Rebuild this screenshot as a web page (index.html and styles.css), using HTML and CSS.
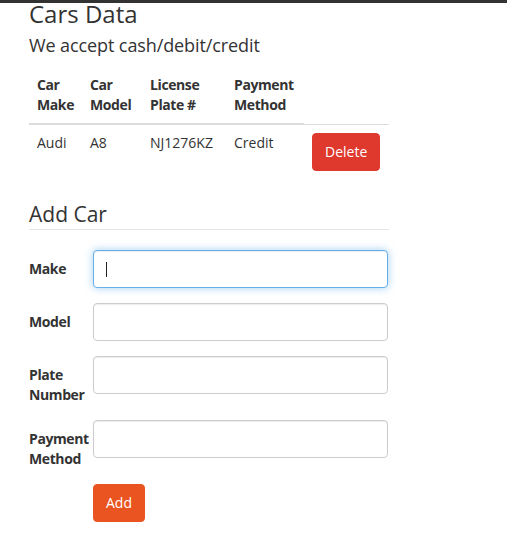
FILE: index.html
```html
<!DOCTYPE html>
<html>
<head>
<meta charset="utf-8">
<title>Cars Data</title>
<link rel="stylesheet" href="styles.css">
</head>
<body>
<div class="topbar"></div>
<div class="container">
  <h3 class="title">Cars Data</h3>
  <p class="lead">We accept cash/debit/credit</p>
  <table class="cars">
    <colgroup>
      <col class="c1"><col class="c2"><col class="c3"><col class="c4"><col class="c5">
    </colgroup>
    <thead>
      <tr>
        <th>Car Make</th>
        <th>Car Model</th>
        <th>License Plate #</th>
        <th>Payment Method</th>
      </tr>
    </thead>
    <tbody>
      <tr>
        <td>Audi</td>
        <td>A8</td>
        <td>NJ1276KZ</td>
        <td>Credit</td>
        <td><button class="btn btn-danger">Delete</button></td>
      </tr>
    </tbody>
  </table>
  <form class="addform">
    <legend>Add Car</legend>
    <div class="row">
      <label>Make</label>
      <div class="field">
        <input class="input focused" type="text">
        <span class="caret"></span>
      </div>
    </div>
    <div class="row">
      <label>Model</label>
      <div class="field"><input class="input" type="text"></div>
    </div>
    <div class="row">
      <label>Plate Number</label>
      <div class="field"><input class="input" type="text"></div>
    </div>
    <div class="row">
      <label>Payment Method</label>
      <div class="field"><input class="input" type="text"></div>
    </div>
    <div class="row">
      <span></span>
      <div class="field"><button type="button" class="btn btn-primary">Add</button></div>
    </div>
  </form>
</div>
</body>
</html>
```
FILE: styles.css
```css
html, body {
  margin: 0;
  padding: 0;
  background: #fff;
}
body {
  font-family: "Open Sans", "Liberation Sans", sans-serif;
  font-size: 14px;
  line-height: 20px;
  color: #333;
}
.topbar {
  height: 3px;
  background: #333;
}
.container {
  padding-left: 29px;
  width: 360px;
}
.title {
  margin: 0;
  font-size: 24px;
  font-weight: 400;
  line-height: 21px;
}
.lead {
  margin: 9px 0 9px;
  font-size: 18px;
  line-height: 25px;
  font-weight: 400;
  letter-spacing: -0.1px;
}
.cars {
  width: 360px;
  table-layout: fixed;
  border-collapse: collapse;
  border-spacing: 0;
  margin-bottom: 20px;
}
.c1 { width: 53px; }
.c2 { width: 60px; }
.c3 { width: 84px; }
.c4 { width: 78px; }
.c5 { width: 85px; }
.cars th {
  text-align: left;
  font-weight: 700;
  letter-spacing: -0.4px;
  vertical-align: bottom;
  padding: 8px;
  border-bottom: 2px solid #ddd;
}
.cars td {
  padding: 8px;
  vertical-align: top;
  border-top: 1px solid #ddd;
}
.btn {
  font-family: inherit;
  font-size: 14px;
  line-height: 20px;
  border: 1px solid transparent;
  border-radius: 4px;
  color: #fff;
  padding: 8px 12px;
  cursor: pointer;
}
.btn-danger {
  background: #df382c;
  border-color: #df382c;
}
.btn-primary {
  background: #e95420;
  border-color: #e95420;
  padding: 8px 12px;
}
.addform {
  margin: 0;
}
legend {
  display: block;
  width: 100%;
  padding: 0;
  margin: 0 0 20px;
  font-size: 21px;
  line-height: 30px;
  color: #333;
  border-bottom: 1px solid #e5e5e5;
}
.row {
  display: grid;
  grid-template-columns: 64px 295px;
  margin-bottom: 15px;
}
.row label {
  font-weight: 700;
  letter-spacing: -0.4px;
  padding: 9px 4px 0 0;
  line-height: 20px;
}
.field {
  position: relative;
}
.input {
  display: block;
  box-sizing: border-box;
  width: 295px;
  height: 38px;
  margin: 0;
  padding: 8px 12px;
  font-family: inherit;
  font-size: 14px;
  border: 1px solid #ccc;
  border-radius: 4px;
  background: #fff;
  outline: none;
  box-shadow: inset 0 1px 1px rgba(0, 0, 0, 0.075);
}
.input.focused {
  border-color: #66afe9;
  box-shadow: inset 0 1px 1px rgba(0, 0, 0, 0.075), 0 0 8px rgba(102, 175, 233, 0.6);
}
.caret {
  position: absolute;
  left: 13px;
  top: 12px;
  width: 1px;
  height: 15px;
  background: #222;
}
```
